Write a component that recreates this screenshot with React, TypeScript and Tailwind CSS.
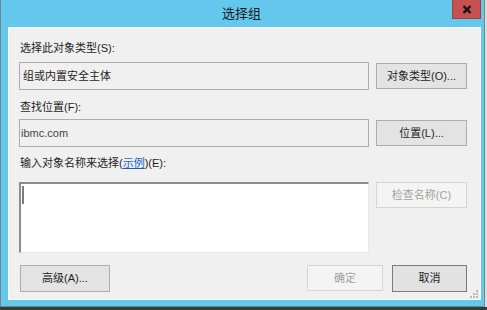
import React from "react";

const font = "font-['Liberation_Sans','Noto_Sans_CJK_SC',sans-serif]";

interface BtnProps {
  label: React.ReactNode;
  className?: string;
  disabled?: boolean;
  strong?: boolean;
}

const Btn = ({ label, className, disabled, strong }: BtnProps) => {
  const tone = disabled
    ? "bg-[#f4f4f4] border-[#d5d5d5] text-[#a2a2a2]"
    : strong
    ? "bg-[#e2e2e2] border-[#7a7a7a] text-[#1e1e1e]"
    : "bg-[#e3e3e3] border-[#acacac] text-[#1e1e1e]";
  return (
    <button
      className={`flex items-center justify-center border text-[11px] leading-none ${tone} ${className ?? ""}`}
    >
      {label}
    </button>
  );
};

const Label = ({ children, className }: { children: React.ReactNode; className?: string }) => (
  <div className={`h-[16px] pl-[1px] flex items-center text-[11px] leading-none text-[#1e1e1e] ${className ?? ""}`}>
    {children}
  </div>
);

const App = () => {
  return (
    <div className={`w-[487px] h-[310px] bg-[#3a3a3a] ${font}`}>
      <div className="flex h-[307px]">
        {/* Window frame */}
        <div className="w-[485px] h-[307px] bg-[#63c8ec] border-l border-r border-b border-[#6f8791] flex flex-col pl-[7px] pr-[3px] pb-[6px]">
          {/* Title bar */}
          <div className="relative h-[27px] shrink-0 flex items-center justify-center">
            <span className="text-[13px] text-[#1a1a1a] ml-[-6px] mt-[1px]">选择组</span>
            <div className="absolute top-0 right-0 w-[29px] h-[19px] bg-[#c75050] border border-t-0 border-[#a33e3e] flex items-center justify-center">
              <svg width="10" height="9" viewBox="0 0 10 9">
                <path d="M1.5 1 L8.5 8 M8.5 1 L1.5 8" stroke="#141414" strokeWidth="2.4" />
              </svg>
            </div>
          </div>

          {/* Client area */}
          <div className="relative flex-1 bg-[#f0f0f0] border border-white flex flex-col pl-[10px] pr-[13px]">
            <Label className="mt-[12px]">选择此对象类型(S):</Label>
            <div className="mt-[6px] flex gap-[7px] items-start">
              <div className="w-[350px] h-[28px] bg-[#f0f0f0] border border-[#acacac] flex items-center pl-[3px] text-[11px] leading-none text-[#1e1e1e]">
                组或内置安全主体
              </div>
              <Btn label="对象类型(O)..." className="w-[91px] h-[26px] mt-[1px]" />
            </div>

            <Label className="mt-[9px]">查找位置(F):</Label>
            <div className="mt-[4px] flex gap-[7px] items-start">
              <div className="w-[350px] h-[28px] bg-[#f0f0f0] border border-[#acacac] flex items-center pl-[1px] text-[11px] leading-none text-[#444444]">
                ibmc.com
              </div>
              <Btn label="位置(L)..." className="w-[91px] h-[26px] mt-[1px]" />
            </div>

            <Label className="mt-[8px]">
              输入对象名称来选择(<span className="text-[#1565c0] underline">示例</span>)(E):
            </Label>
            <div className="mt-[11px] flex gap-[7px] items-start">
              <div className="relative w-[350px] h-[71px] bg-white border-t-2 border-l-2 border-r border-b border-t-[#8c8c8c] border-l-[#8c8c8c] border-r-[#e6e6e6] border-b-[#e6e6e6]">
                <div className="absolute left-[1px] top-[2px] w-[2px] h-[18px] bg-[#7c7c7c]" />
              </div>
              <Btn label="检查名称(C)" disabled className="w-[91px] h-[26px]" />
            </div>

            <div className="mt-[12px] flex items-start">
              <Btn label="高级(A)..." className="w-[90px] h-[27px] ml-[1px]" />
              <div className="flex-1" />
              <Btn label="确定" disabled className="w-[76px] h-[26px]" />
              <Btn label="取消" strong className="w-[75px] h-[27px] ml-[9px]" />
            </div>

            {/* Size grip */}
            <svg className="absolute right-[2px] bottom-[1px]" width="8" height="8" viewBox="0 0 8 8">
              {[
                [6, 0],
                [6, 3],
                [3, 3],
                [6, 6],
                [3, 6],
                [0, 6],
              ].map(([x, y]) => (
                <rect key={`${x}-${y}`} x={x} y={y} width="2" height="2" fill="#b8b8b8" />
              ))}
            </svg>
          </div>
        </div>
        <div className="flex-1 bg-[#dcdcdc]" />
      </div>
    </div>
  );
};

export default App;
